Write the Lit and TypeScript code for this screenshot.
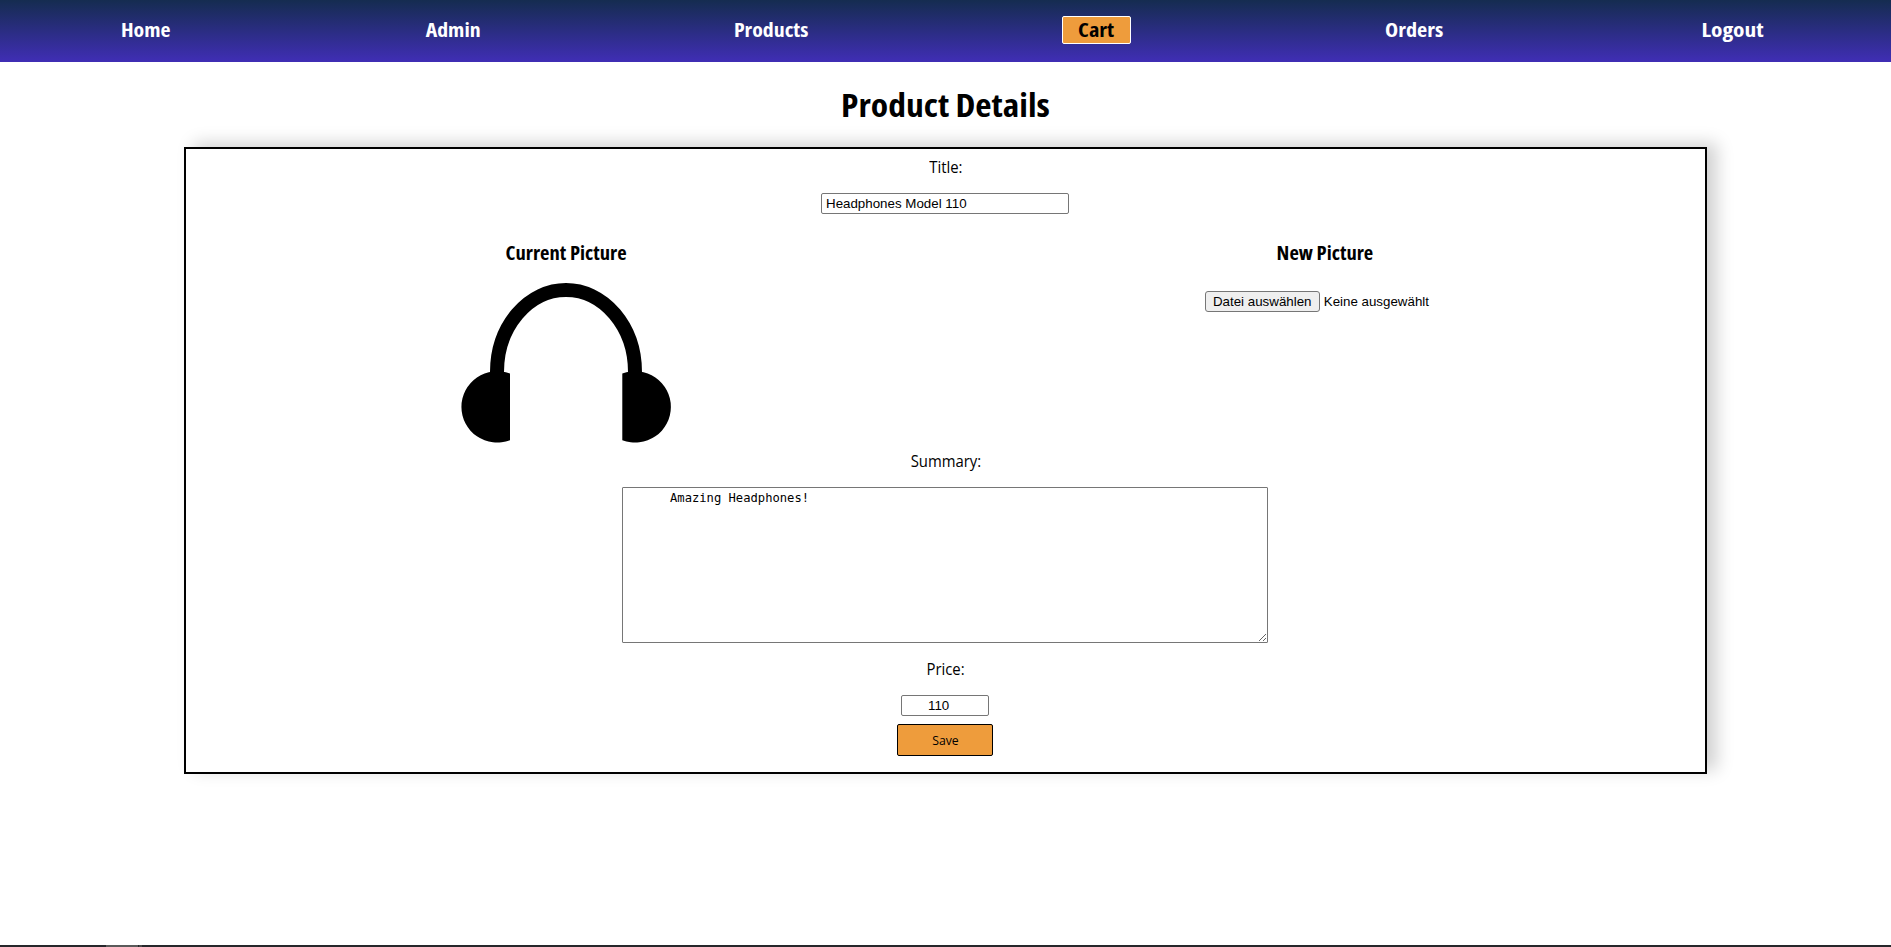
import { LitElement, html, css } from "lit";
import { customElement, property } from "lit/decorators.js";

@customElement("shop-nav")
class ShopNav extends LitElement {
  @property() active = "Cart";
  static styles = css`
    :host { display: block; }
    .bar {
      box-sizing: border-box; height: 62px; padding: 16px 0 0 121px;
      display: flex; gap: 253.7px; align-items: flex-start;
      background: linear-gradient(#152c50, #402eb5);
      font: bold 20px/28px "Open Sans", "Noto Sans", sans-serif; font-stretch: 75%;
    }
    .link { color: #fff; text-decoration: none; display: flex; justify-content: center; white-space: nowrap; box-sizing: border-box; }
    .text { display: inline-block; transform: scaleX(1.09); }
    .home { width: 50px; } .admin { width: 56px; } .products { width: 74px; }
    .cart { width: 69px; } .orders { width: 58px; } .logout { width: 62px; margin-left: 5px; }
    .orders .text { transform: scaleX(1.11); }
    .logout .text { transform: scaleX(1.17); }
    .active { height: 28px; line-height: 26px; color: #000; background: #ee9c3c; border: 1px solid #fff; border-radius: 2px; }
    .active .text { transform: scaleX(1.12); }
  `;
  render() {
    const items = ["Home", "Admin", "Products", "Cart", "Orders", "Logout"];
    return html`<nav class="bar">${items.map(
      (i) => html`<a class="link ${i.toLowerCase()} ${i === this.active ? "active" : ""}"><span class="text">${i}</span></a>`
    )}</nav>`;
  }
}

@customElement("app-root")
class AppRoot extends LitElement {
  static styles = css`
    :host { display: flex; flex-direction: column; height: 947px; overflow: hidden; background: #fff; color: #000;
      font: 16px/22px "Open Sans", "Noto Sans", sans-serif; }
    .heading { margin: 22px 0 0; height: 42px; font-size: 32px; line-height: 42px; text-align: center; font-weight: bold; font-stretch: 75%; transform: scaleX(1.11); }
    .card { box-sizing: border-box; width: 1523px; height: 627px; margin: 21px 0 0 184px; border: 2px solid #000;
      box-shadow: 10px -4px 16px rgba(0, 0, 0, 0.18);
      display: flex; flex-direction: column; align-items: center; }
    .label { height: 22px; margin-top: 7px; transform: scaleX(0.93); }
    .field { box-sizing: border-box; display: block; height: 21px; margin: 15px 1px 0 0; padding: 1px 4px; border: 1px solid #767676; border-radius: 2px;
      font: 13.333px "Liberation Sans", Arial, sans-serif; background: #fff; color: #000; outline: none; }
    .title { width: 248px; }
    .price { width: 88px; padding-left: 26px; }
    .pictures { align-self: stretch; display: grid; grid-template-columns: 1fr 1fr; height: 229px; justify-items: center; }
    .column { display: flex; flex-direction: column; align-items: center; }
    .sub { margin: 26px 0 0; height: 26px; font-size: 18.72px; line-height: 26px; font-weight: bold; font-stretch: 75%; transform: scaleX(1.1); }
    .photo { display: block; margin-top: 16px; width: 212px; height: 162px; }
    .file { display: flex; align-items: center; margin-top: 25px; width: 241px; height: 21px; gap: 4px; font: 13.333px "Liberation Sans", Arial, sans-serif; white-space: nowrap; }
    .choose { box-sizing: border-box; width: 115px; height: 21px; padding: 0; border: 1px solid #767676; border-radius: 3px; background: #efefef; font: inherit; color: #000; }
    .summary { box-sizing: border-box; display: block; width: 646px; height: 156px; margin: 15px 1px 8px 0; padding: 3px 2px 2px 47px; border: 1px solid #767676; border-radius: 1px;
      font: 12.17px/15px "DejaVu Sans Mono", monospace; resize: both; background: #fff; color: #000; outline: none; }
    .save { box-sizing: border-box; width: 96px; height: 32px; margin: 8px 1px 0 0; padding: 0; background: #ee9c3c; border: 1px solid #000; border-radius: 2px;
      font: 13.333px/20px "Open Sans", "Noto Sans", sans-serif; color: #000; }
    .save-text { display: inline-block; transform: scaleX(0.92); }
    .taskbar { margin-top: auto; height: 2px; background: #26272b; display: flex; gap: 1px; padding-left: 106px; }
    .tab { width: 32px; background: #5a5a5a; }
    .edge { width: 3px; background: #484848; }
  `;
  render() {
    return html`
      <shop-nav></shop-nav>
      <h1 class="heading">Product Details</h1>
      <form class="card">
        <label class="label">Title:</label>
        <input class="field title" .value=${"Headphones Model 110"} />
        <div class="pictures">
          <div class="column">
            <h3 class="sub">Current Picture</h3>
            <svg class="photo" viewBox="460 282 212 162">
              <path d="M497 374v-2a69 82 0 0 1 138 0v2" fill="none" stroke="#000" stroke-width="14" />
              <path d="M510 373.6a35.7 35.7 0 1 0 0 66.6zM622.3 373.6a35.7 35.7 0 1 1 0 66.6z" />
            </svg>
          </div>
          <div class="column">
            <h3 class="sub">New Picture</h3>
            <div class="file"><button type="button" class="choose">Datei auswählen</button><span>Keine ausgewählt</span></div>
          </div>
        </div>
        <label class="label">Summary:</label>
        <textarea class="summary" spellcheck="false" .value=${"Amazing Headphones!"}></textarea>
        <label class="label">Price:</label>
        <input class="field price" .value=${"110"} />
        <button type="button" class="save"><span class="save-text">Save</span></button>
      </form>
      <div class="taskbar"><div class="tab"></div><div class="edge"></div></div>
    `;
  }
}
